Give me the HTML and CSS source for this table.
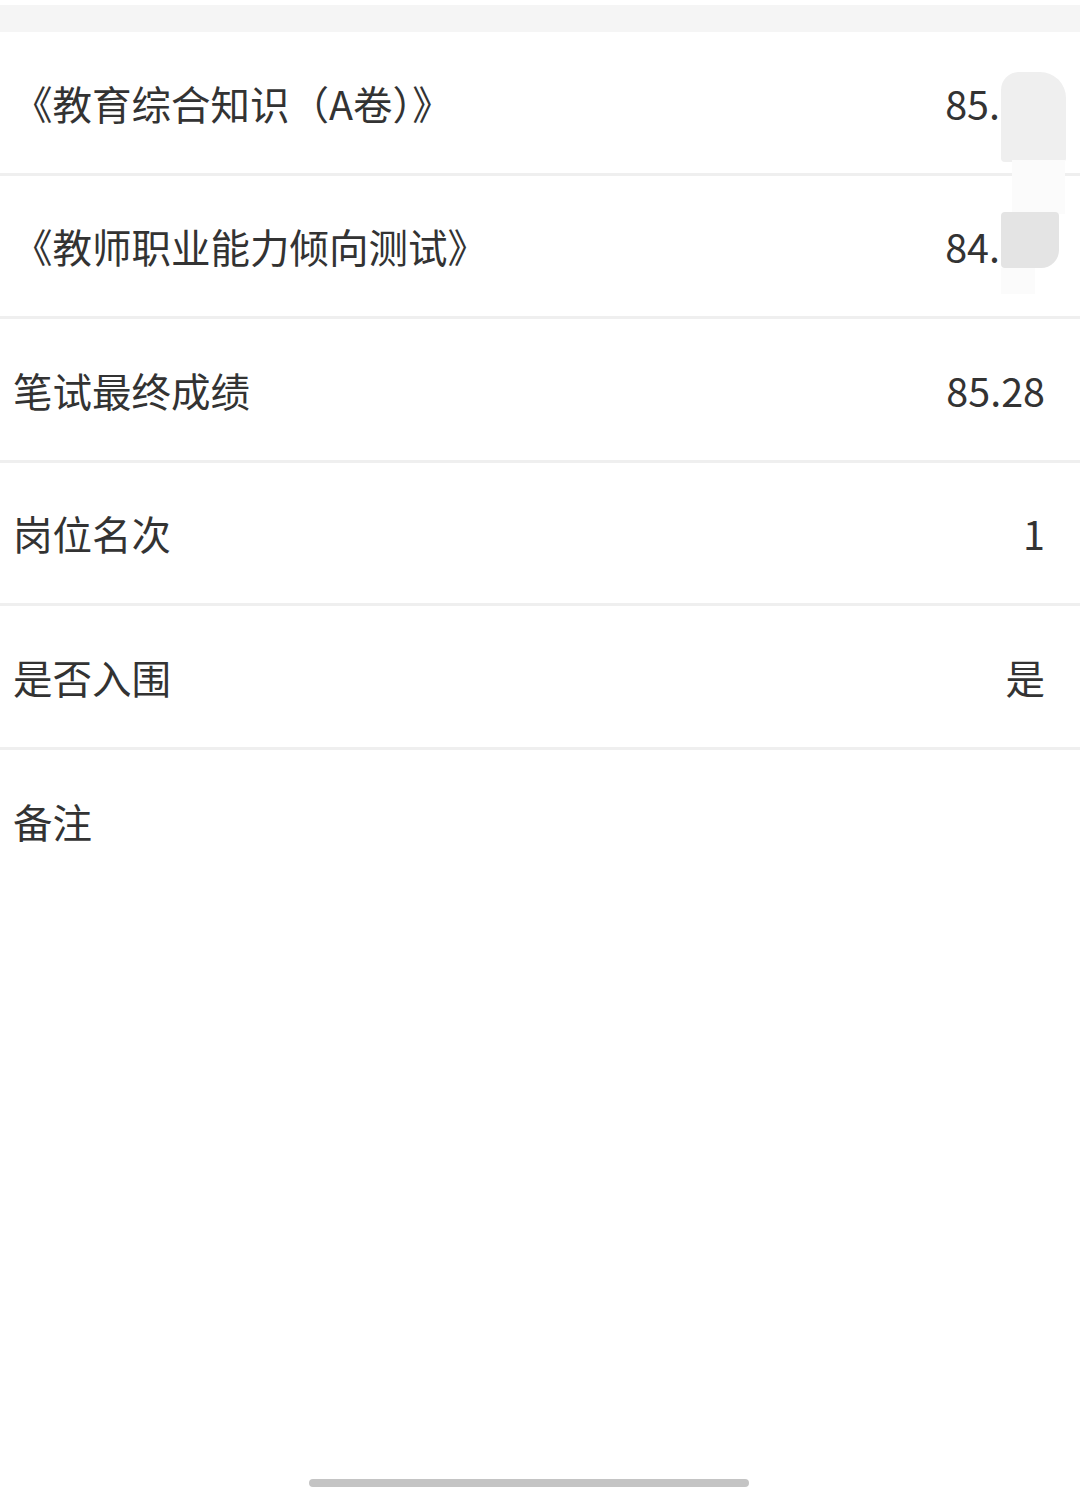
FILE: index.html
```html
<!DOCTYPE html>
<html lang="zh-CN">
<head>
<meta charset="utf-8">
<title>成绩</title>
<link rel="stylesheet" href="styles.css">
</head>
<body>
<div class="page">
  <div class="top-gap"></div>
  <div class="top-band"></div>
  <ul class="list">
    <li class="row"><span class="label">《教育综合知识（A卷）》</span><span class="value value-masked">85.</span></li>
    <li class="row"><span class="label">《教师职业能力倾向测试》</span><span class="value value-masked">84.</span></li>
    <li class="row"><span class="label">笔试最终成绩</span><span class="value">85.28</span></li>
    <li class="row"><span class="label">岗位名次</span><span class="value">1</span></li>
    <li class="row"><span class="label">是否入围</span><span class="value">是</span></li>
    <li class="row row-last"><span class="label">备注</span><span class="value"></span></li>
  </ul>
  <div class="smudge">
    <div class="smudge-top"></div>
    <div class="smudge-mid"></div>
    <div class="smudge-bottom"></div>
    <div class="smudge-tail"></div>
  </div>
  <div class="home-indicator"></div>
</div>
</body>
</html>
```

FILE: styles.css
```css
html, body {
  margin: 0;
  padding: 0;
  background: #ffffff;
}

.page {
  position: relative;
  width: 1080px;
  height: 1489px;
  overflow: hidden;
  font-family: "Noto Sans CJK SC", "Noto Sans", sans-serif;
  color: #333333;
}

.top-gap {
  height: 5px;
  background: #ffffff;
}

.top-band {
  height: 27px;
  background: #f5f5f5;
}

.list {
  list-style: none;
  margin: 0;
  padding: 0;
}

.row {
  box-sizing: border-box;
  height: 143.5px;
  display: flex;
  align-items: center;
  justify-content: space-between;
  padding: 0 35px 0 13px;
  border-bottom: 3px solid #efefef;
  font-size: 39.5px;
}

.row-last {
  border-bottom: none;
  height: 141px;
}

.label {
  white-space: nowrap;
}

.value {
  white-space: nowrap;
}

.value-masked {
  margin-right: 45px;
}

/* hand-drawn redaction mark over the first two scores */
.smudge {
  position: absolute;
  left: 1000px;
  top: 72px;
  width: 68px;
  height: 225px;
}

.smudge-top {
  position: absolute;
  left: 1px;
  top: 0;
  width: 65px;
  height: 90px;
  background: #efefef;
  border-radius: 18px 26px 4px 4px;
}

.smudge-mid {
  position: absolute;
  left: 12px;
  top: 88px;
  width: 53px;
  height: 54px;
  background: #fbfbfb;
}

.smudge-bottom {
  position: absolute;
  left: 1px;
  top: 140px;
  width: 58px;
  height: 56px;
  background: #e4e4e4;
  border-radius: 4px 4px 18px 4px;
}

.smudge-tail {
  position: absolute;
  left: 1px;
  top: 196px;
  width: 34px;
  height: 26px;
  background: #fbfbfb;
}

.home-indicator {
  position: absolute;
  left: 309px;
  top: 1479px;
  width: 440px;
  height: 8px;
  border-radius: 4px;
  background: #c4c4c4;
}
```
